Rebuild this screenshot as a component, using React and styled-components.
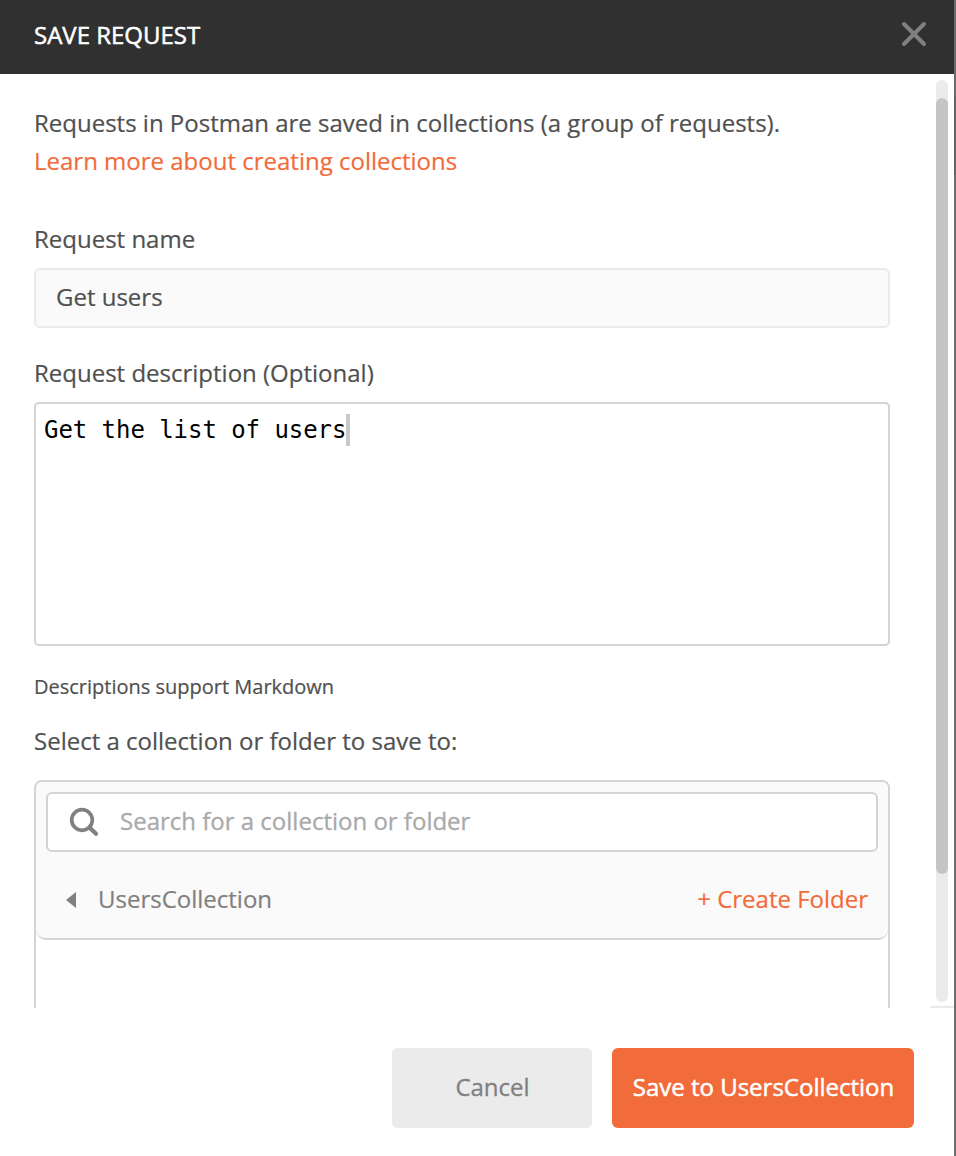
import React from "react";
import styled, { createGlobalStyle } from "styled-components";

const GlobalStyle = createGlobalStyle`
  * { box-sizing: border-box; }
  html, body { margin: 0; padding: 0; overflow: hidden; }
  body, input, textarea, button { font-family: "Open Sans", sans-serif; }
`;

const Window = styled.div`
  display: flex;
  width: 956px;
  height: 1156px;
  overflow: hidden;
  background: #fff;
  color: #505050;
  font-size: 24px;
  -webkit-text-stroke: 0.2px;
`;

const Modal = styled.section`
  display: flex;
  flex-direction: column;
  width: 954px;
`;

const Backdrop = styled.div`
  width: 2px;
  background: linear-gradient(#6c6c6c 0 96px, #656565 96px 175px, #707070 175px);
`;

const Header = styled.header`
  display: flex;
  align-items: center;
  justify-content: space-between;
  height: 74px;
  padding: 0 26px 6px 34px;
  background: #303030;
`;

const Title = styled.h1`
  margin: 2px 0 0;
  color: #fff;
  font-size: 24px;
  font-weight: 400;
  line-height: 38px;
  -webkit-text-stroke: 0.5px;
`;

const CloseButton = styled.button`
  display: flex;
  padding: 0;
  border: 0;
  background: none;
`;

const Body = styled.main`
  display: flex;
  height: 934px;
  overflow: hidden;
`;

const Form = styled.div`
  width: 856px;
  margin-left: 34px;
  padding-top: 30px;
`;

const Line = styled.div`
  height: 38px;
  line-height: 38px;
  white-space: nowrap;
  color: ${(p) => (p.$accent ? "#f26b3a" : "#505050")};
`;

const Label = styled(Line)`
  margin: ${(p) => p.$margin};
`;

const NameInput = styled.input`
  display: block;
  width: 856px;
  height: 60px;
  padding: 0 20px 4px;
  border: 2px solid #eaeaea;
  border-radius: 6px;
  background: #fafafa;
  color: #505050;
  font-size: 24px;
  outline: 0;
`;

const Description = styled.div`
  display: flex;
  height: 244px;
  padding: 10px 8px;
  border: 2px solid #d4d4d4;
  border-radius: 5px;
  background: #fff;
  color: #000;
  font: 24px/32px "DejaVu Sans Mono", monospace;
  letter-spacing: -0.05px;
  -webkit-text-stroke: 0;
  white-space: pre;
`;

const Caret = styled.span`
  width: 4px;
  height: 32px;
  background: #c9c9c9;
`;

const Hint = styled.div`
  height: 30px;
  margin-top: 26px;
  font-size: 20px;
  line-height: 30px;
`;

const Picker = styled.div`
  height: 320px;
  border: 2px solid #d4d4d4;
  border-radius: 8px;
`;

const PickerHeader = styled.div`
  height: 158px;
  padding: 10px;
  border-bottom: 2px solid #d4d4d4;
  border-radius: 6px 6px 10px 10px;
  background: #fafafa;
`;

const SearchBox = styled.div`
  display: flex;
  align-items: center;
  height: 60px;
  padding-left: 21px;
  border: 2px solid #d4d4d4;
  border-radius: 6px;
  background: #fff;
`;

const SearchInput = styled.input`
  flex: 1;
  height: 56px;
  margin-left: 21px;
  padding: 0 0 4px;
  border: 0;
  outline: 0;
  background: none;
  font-size: 24px;
  -webkit-text-stroke: 0.3px;
  &::placeholder { color: #a9a9a9; opacity: 1; }
`;

const FolderRow = styled.div`
  display: flex;
  align-items: center;
  margin-top: 28px;
  padding: 0 10px 0 20px;
  line-height: 38px;
  svg { margin-top: 2px; }
`;

const FolderName = styled.span`
  flex: 1;
  margin-left: 22px;
  color: #808080;
`;

const CreateLink = styled.span`
  color: #f26b3a;
`;

const ScrollArea = styled.aside`
  display: flex;
  flex-direction: column;
  justify-content: space-between;
  width: 24px;
  margin-left: 40px;
  padding-top: 6px;
  border-bottom: 2px solid #eaeaea;
`;

const Track = styled.div`
  width: 12px;
  height: 922px;
  margin-left: 6px;
  padding-top: 18px;
  border-radius: 6px;
  background: #ebebeb;
`;

const Thumb = styled.div`
  height: 776px;
  border-radius: 6px;
  background: #c5c5c5;
`;

const Footer = styled.footer`
  display: flex;
  justify-content: flex-end;
  gap: 20px;
  padding: 40px 40px 0 0;
`;

const Button = styled.button`
  width: ${(p) => (p.$primary ? 302 : 200)}px;
  height: 80px;
  padding: 0 0 4px 1px;
  border: 0;
  border-radius: 6px;
  background: ${(p) => (p.$primary ? "#f26b3a" : "#ebebeb")};
  color: ${(p) => (p.$primary ? "#fff" : "#808080")};
  font-size: 24px;
  white-space: nowrap;
  -webkit-text-stroke: ${(p) => (p.$primary ? "0.5px" : "0.3px")};
`;

export default function App() {
  return (
    <Window>
      <GlobalStyle />
      <Modal>
        <Header>
          <Title>SAVE REQUEST</Title>
          <CloseButton aria-label="Close">
            <svg width="28" height="28" viewBox="0 0 28 28" fill="none" stroke="#808080" strokeWidth="4" strokeLinecap="round">
              <path d="M4 4 24 24M24 4 4 24" />
            </svg>
          </CloseButton>
        </Header>
        <Body>
          <Form>
            <Line>Requests in Postman are saved in collections (a group of requests).</Line>
            <Line $accent>Learn more about creating collections</Line>
            <Label $margin="40px 0 10px">Request name</Label>
            <NameInput defaultValue="Get users" />
            <Label $margin="26px 0 10px">Request description (Optional)</Label>
            <Description>
              Get the list of users
              <Caret />
            </Description>
            <Hint>Descriptions support Markdown</Hint>
            <Label $margin="20px 0 20px">Select a collection or folder to save to:</Label>
            <Picker>
              <PickerHeader>
                <SearchBox>
                  <svg width="30" height="30" viewBox="0 0 30 30" fill="none" stroke="#808080" strokeWidth="3.7">
                    <circle cx="13" cy="13" r="10.3" />
                    <path d="M20.5 20.5 27 26.7" strokeWidth="4.2" strokeLinecap="round" />
                  </svg>
                  <SearchInput placeholder="Search for a collection or folder" />
                </SearchBox>
                <FolderRow>
                  <svg width="10" height="16" viewBox="0 0 10 16" fill="#808080">
                    <path d="M10 0V16L0 8Z" />
                  </svg>
                  <FolderName>UsersCollection</FolderName>
                  <CreateLink>+ Create Folder</CreateLink>
                </FolderRow>
              </PickerHeader>
            </Picker>
          </Form>
          <ScrollArea>
            <Track>
              <Thumb />
            </Track>
          </ScrollArea>
        </Body>
        <Footer>
          <Button>Cancel</Button>
          <Button $primary>Save to UsersCollection</Button>
        </Footer>
      </Modal>
      <Backdrop />
    </Window>
  );
}
